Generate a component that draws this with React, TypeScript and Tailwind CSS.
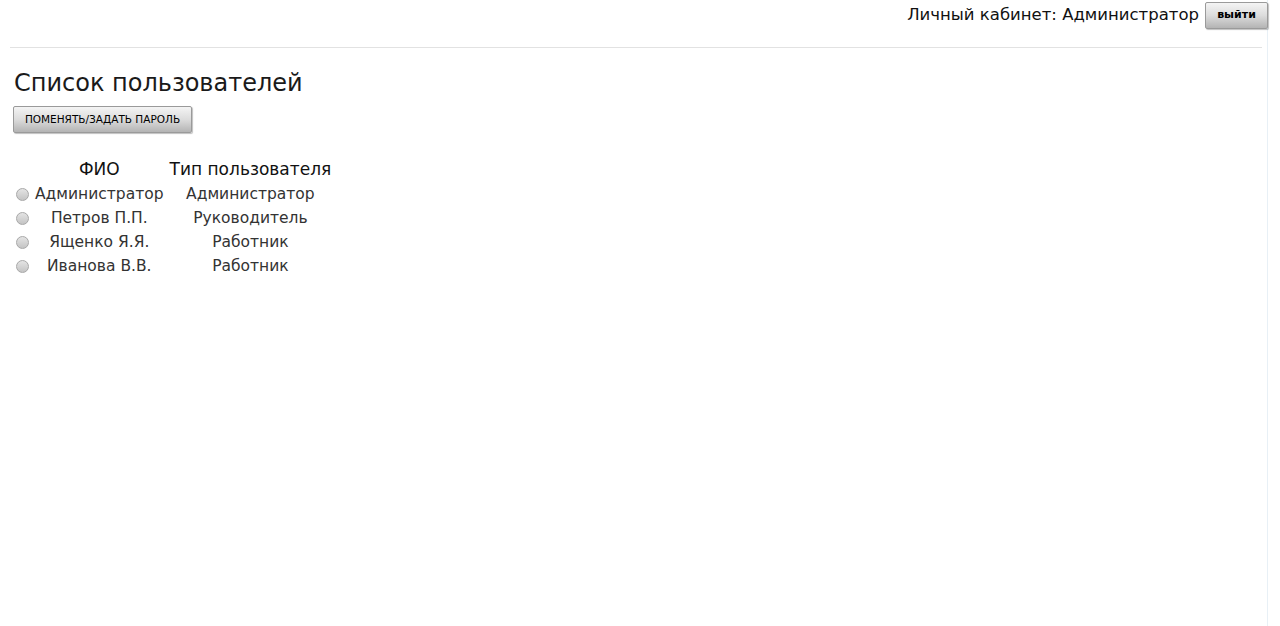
import React from 'react';

const users = [
  { name: 'Администратор', role: 'Администратор' },
  { name: 'Петров П.П.', role: 'Руководитель' },
  { name: 'Ященко Я.Я.', role: 'Работник' },
  { name: 'Иванова В.В.', role: 'Работник' },
];

const btn =
  'border border-[#9a9a9a] rounded-[2px] bg-gradient-to-b from-[#f4f4f4] via-[#dcdcdc] to-[#b4b4b4] shadow-[1px_1px_1px_rgba(0,0,0,0.25)] text-black';

const App = () => {
  return (
    <div className="min-h-[626px] bg-white font-['DejaVu_Sans',Verdana,sans-serif] text-[#111]">
      <div className="mr-[12px] border-r border-[#e8f0f6] min-h-[626px]">
        <div className="flex items-center justify-end gap-[6px] pt-[2px] h-[29px] -mr-[1px]">
          <span className="text-[16.5px] leading-none">Личный кабинет: Администратор</span>
          <button className={`${btn} w-[63px] h-[27px] text-[11px] font-bold`}>выйти</button>
        </div>
        <hr className="ml-[10px] mr-[5px] mt-[18px] border-0 border-t border-[#e2e2e2]" />

        <div className="pl-[13px]">
          <h1 className="mt-[20px] ml-[1px] text-[24px] leading-[30px] font-normal text-[#1a1a1a]">Список пользователей</h1>
          <button className={`${btn} mt-[8px] w-[179px] h-[27px] text-[10.5px] uppercase`}>
            Поменять/задать пароль
          </button>

          <table className="mt-[24px] border-separate border-spacing-0">
            <thead>
              <tr className="h-[24px]">
                <th className="w-[20px]"></th>
                <th className="font-normal text-[17px] px-[2px] text-center text-[#111]">ФИО</th>
                <th className="font-normal text-[17px] px-[4px] text-center text-[#111]">Тип пользователя</th>
              </tr>
            </thead>
            <tbody>
              {users.map((u) => (
                <tr key={u.name} className="h-[24px] text-[15.5px] text-[#333]">
                  <td className="text-left align-middle">
                    <span className="inline-block w-[13px] h-[13px] rounded-full border border-[#a8a8a8] bg-gradient-to-b from-[#e4e4e4] to-[#c4c4c4] align-middle ml-[3px]" />
                  </td>
                  <td className="text-center px-[2px]">{u.name}</td>
                  <td className="text-center px-[4px]">{u.role}</td>
                </tr>
              ))}
            </tbody>
          </table>
        </div>
      </div>
    </div>
  );
};

export default App;
